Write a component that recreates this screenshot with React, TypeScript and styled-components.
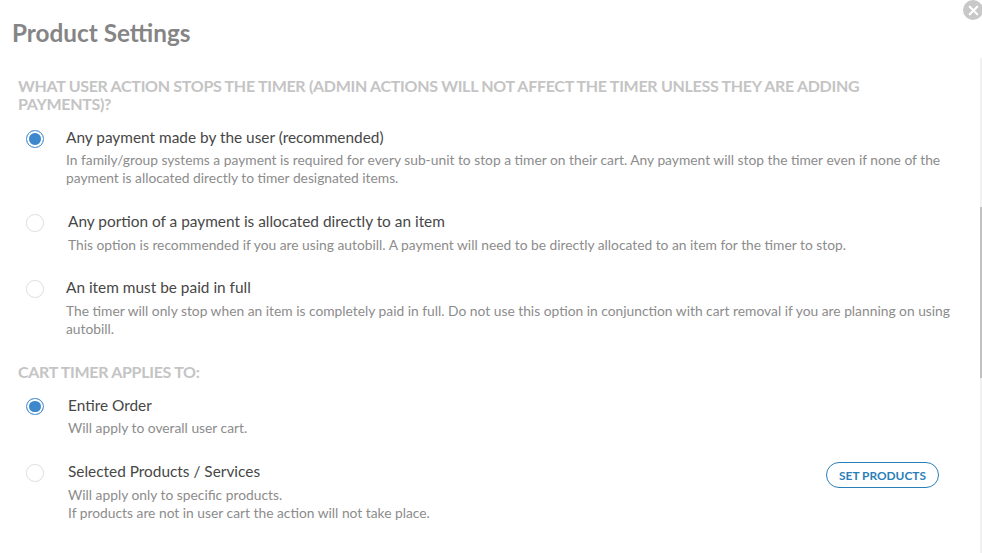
import styled, { createGlobalStyle } from 'styled-components';
import { X } from 'lucide-react';

const GlobalStyle = createGlobalStyle`
  html, body {
    margin: 0;
    padding: 0;
    background: #fff;
    overflow: hidden;
  }
  body {
    font-family: Lato, "Liberation Sans", sans-serif;
  }
`;

const Modal = styled.div`
  position: relative;
  width: 982px;
  height: 553px;
  overflow: hidden;
  background: #fff;
`;

const CloseButton = styled.button`
  position: absolute;
  top: 0;
  left: 963px;
  width: 20px;
  height: 20px;
  padding: 0;
  border: 0;
  border-radius: 50%;
  background: #c8c8c8;
  color: #fff;
  display: flex;
  align-items: center;
  justify-content: center;
`;

const ScrollTrack = styled.div`
  position: absolute;
  top: 58px;
  right: 0;
  bottom: 0;
  width: 2px;
  background: #f1f1f1;
`;

const ScrollThumb = styled.div`
  position: absolute;
  top: 149px;
  left: 0;
  width: 2px;
  height: 171px;
  background: #c1c1c1;
`;

const Title = styled.h1`
  margin: 0;
  padding: 18px 0 0 12px;
  font-size: 24.3px;
  line-height: 29px;
  font-weight: 700;
  color: #858585;
`;

const Body = styled.div`
  padding: 30px 30px 0 18px;
`;

const SectionHeading = styled.h2<{ $top?: number }>`
  margin: ${(p) => p.$top ?? 0}px 0 0;
  font-size: 16px;
  line-height: 18px;
  font-weight: 700;
  letter-spacing: -0.3px;
  color: #c4c4c4;
  text-transform: uppercase;
`;

const OptionList = styled.div<{ $top: number }>`
  margin-top: ${(p) => p.$top}px;
  display: flex;
  flex-direction: column;
  gap: 23.7px;
`;

const Option = styled.div<{ $textLeft: number }>`
  display: grid;
  grid-template-columns: ${(p) => p.$textLeft}px 1fr auto;
  padding-left: 8px;
  align-items: start;
`;

const Radio = styled.span<{ $checked?: boolean }>`
  box-sizing: border-box;
  width: 17.5px;
  height: 17.5px;
  margin-top: 3px;
  border-radius: 50%;
  border: 1px solid ${(p) => (p.$checked ? '#5b9bd8' : '#dedede')};
  background: ${(p) => (p.$checked ? '#3d87cc' : '#fff')};
  box-shadow: ${(p) => (p.$checked ? 'inset 0 0 0 2px #fff' : 'none')};
`;

const OptionText = styled.div`
  min-width: 0;
`;

const OptionLabel = styled.div`
  font-size: 15.4px;
  line-height: 20px;
  color: #474747;
`;

const OptionHelp = styled.p`
  margin: 4.45px 0 0;
  font-size: 13.8px;
  line-height: 18px;
  color: #8c8c8c;
`;

const PillButton = styled.button`
  box-sizing: border-box;
  height: 26px;
  width: 113px;
  margin: 1px 13px 0 0;
  padding: 0;
  border: 1px solid #2a7fb8;
  border-radius: 13px;
  background: #fff;
  color: #2a7fb8;
  font-family: inherit;
  font-size: 11.9px;
  font-weight: 700;
  text-transform: uppercase;
`;

export default function App() {
  return (
    <Modal>
      <GlobalStyle />
      <CloseButton aria-label="Close">
        <X size={15} strokeWidth={3.4} />
      </CloseButton>
      <ScrollTrack>
        <ScrollThumb />
      </ScrollTrack>
      <Title>Product Settings</Title>
      <Body>
        <SectionHeading>
          What user action stops the timer (admin actions will not affect the timer unless they are adding payments)?
        </SectionHeading>
        <OptionList $top={14}>
          <Option $textLeft={40}>
            <Radio $checked />
            <OptionText>
              <OptionLabel>Any payment made by the user (recommended)</OptionLabel>
              <OptionHelp>
                In family/group systems a payment is required for every sub-unit to stop a timer on their cart. Any payment will stop the timer even if none of the payment is allocated directly to timer designated items.
              </OptionHelp>
            </OptionText>
          </Option>
          <Option $textLeft={42}>
            <Radio />
            <OptionText>
              <OptionLabel>Any portion of a payment is allocated directly to an item</OptionLabel>
              <OptionHelp>
                This option is recommended if you are using autobill. A payment will need to be directly allocated to an item for the timer to stop.
              </OptionHelp>
            </OptionText>
          </Option>
          <Option $textLeft={40}>
            <Radio />
            <OptionText>
              <OptionLabel>An item must be paid in full</OptionLabel>
              <OptionHelp>
                The timer will only stop when an item is completely paid in full. Do not use this option in conjunction with cart removal if you are planning on using autobill.
              </OptionHelp>
            </OptionText>
          </Option>
        </OptionList>
        <SectionHeading $top={25.25}>Cart timer applies to:</SectionHeading>
        <OptionList $top={14}>
          <Option $textLeft={42}>
            <Radio $checked />
            <OptionText>
              <OptionLabel>Entire Order</OptionLabel>
              <OptionHelp>Will apply to overall user cart.</OptionHelp>
            </OptionText>
          </Option>
          <Option $textLeft={42}>
            <Radio />
            <OptionText>
              <OptionLabel>Selected Products / Services</OptionLabel>
              <OptionHelp>
                Will apply only to specific products.
                <br />
                If products are not in user cart the action will not take place.
              </OptionHelp>
            </OptionText>
            <PillButton>Set Products</PillButton>
          </Option>
        </OptionList>
      </Body>
    </Modal>
  );
}
